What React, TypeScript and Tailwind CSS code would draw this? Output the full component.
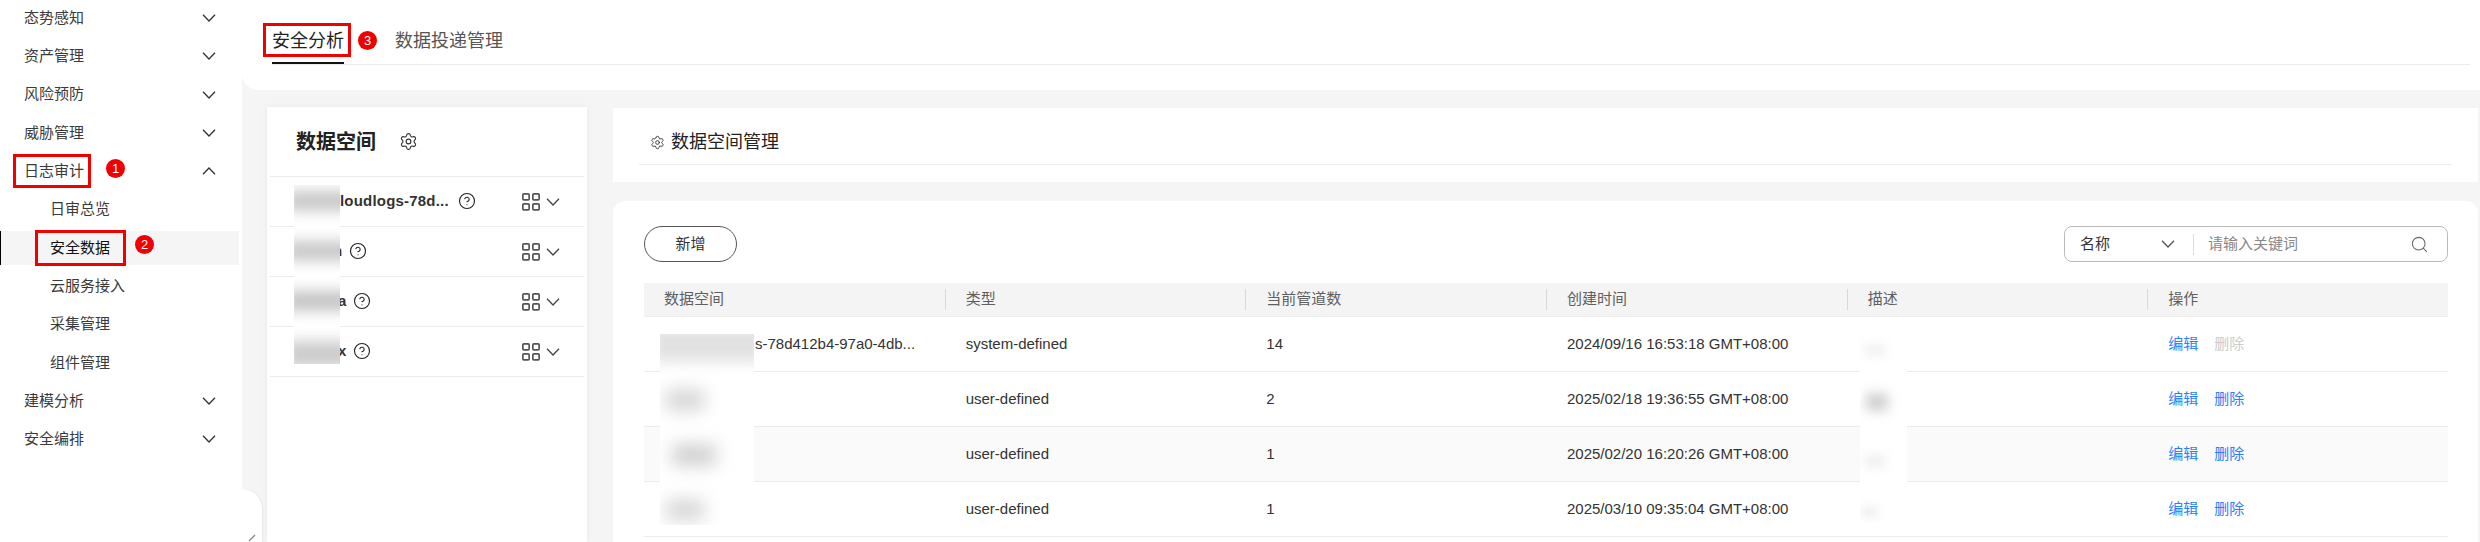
import { CircleHelp, Search, Settings } from 'lucide-react';

const font = { fontFamily: '"Liberation Sans", "Noto Sans CJK SC", sans-serif' };

type NavItem = { label: string; sub?: boolean; open?: boolean; active?: boolean; arrow?: boolean };

const navItems: NavItem[] = [
	{ label: '态势感知', arrow: true },
	{ label: '资产管理', arrow: true },
	{ label: '风险预防', arrow: true },
	{ label: '威胁管理', arrow: true },
	{ label: '日志审计', arrow: true, open: true },
	{ label: '日审总览', sub: true },
	{ label: '安全数据', sub: true, active: true },
	{ label: '云服务接入', sub: true },
	{ label: '采集管理', sub: true },
	{ label: '组件管理', sub: true },
	{ label: '建模分析', arrow: true },
	{ label: '安全编排', arrow: true },
];

const spaces = [
	{ name: 'loudlogs-78d...', pad: 'pl-[70px]', gap: 'ml-[9px]' },
	{ name: 'n', pad: 'pl-[63px]', gap: 'ml-[7px]' },
	{ name: 'a', pad: 'pl-[68px]', gap: 'ml-[6px]' },
	{ name: 'x', pad: 'pl-[68px]', gap: 'ml-[6px]' },
];

const headers = ['数据空间', '类型', '当前管道数', '创建时间', '描述', '操作'];

const rows = [
	{ name: 's-78d412b4-97a0-4db...', type: 'system-defined', count: '14', time: '2024/09/16 16:53:18 GMT+08:00', canDelete: false, bg: 'bg-white' },
	{ name: '', type: 'user-defined', count: '2', time: '2025/02/18 19:36:55 GMT+08:00', canDelete: true, bg: 'bg-white' },
	{ name: '', type: 'user-defined', count: '1', time: '2025/02/20 16:20:26 GMT+08:00', canDelete: true, bg: 'bg-[#fafafa]' },
	{ name: '', type: 'user-defined', count: '1', time: '2025/03/10 09:35:04 GMT+08:00', canDelete: true, bg: 'bg-white' },
];

function Chevron({ up = false, className = '' }: { up?: boolean; className?: string }) {
	return (
		<svg width="14" height="8" viewBox="0 0 14 8" fill="none" stroke="currentColor" strokeWidth="1.3" className={className}>
			<path d={up ? 'M1 7.2 7 1l6 6.2' : 'M1 .8 7 7l6-6.2'} />
		</svg>
	);
}

function GridIcon() {
	return (
		<svg width="18" height="18" viewBox="0 0 18 18" fill="none" stroke="#555" strokeWidth="1.7">
			<rect x=".85" y=".85" width="6.3" height="6" rx="1" />
			<rect x="10.85" y=".85" width="6.3" height="6" rx="1" />
			<rect x=".85" y="10.85" width="6.3" height="6" rx="1" />
			<rect x="10.85" y="10.85" width="6.3" height="6" rx="1" />
		</svg>
	);
}

function Badge({ n, className }: { n: number; className: string }) {
	return (
		<div className={`absolute w-[19px] h-[19px] rounded-full bg-[#f00000] text-white text-[13px] leading-[19px] text-center ${className}`}>
			{n}
		</div>
	);
}

function Sidebar() {
	return (
		<aside className="w-[242px] shrink-0 bg-white -mt-px">
			{navItems.map((item) => (
				<div key={item.label} className={`h-[38.3px] flex items-center ${item.active ? 'mr-[3px] py-[2.5px]' : ''}`}>
					<div className={`flex-1 h-full flex items-center justify-between text-[15px] ${item.sub ? 'pl-[50px]' : 'pl-[24px]'} ${item.active ? 'bg-[#f5f5f5] border-l border-black text-[#111]' : 'text-[#3a3a3a]'} pr-[26px]`}>
						<span className={item.active ? '-ml-px' : ''}>{item.label}</span>
						{item.arrow && <Chevron up={item.open} className="text-[#333]" />}
					</div>
				</div>
			))}
		</aside>
	);
}

function SpaceList() {
	return (
		<section className="w-[320px] shrink-0 bg-white shadow-[0_0_6px_rgba(0,0,0,0.06)] px-[3px]">
			<div className="h-[69px] flex items-center pl-[26px] gap-[23px]">
				<h2 className="text-[20px] font-bold text-[#222]">数据空间</h2>
				<Settings size={19} strokeWidth={1.4} className="text-[#333]" />
			</div>
			{spaces.map((s) => (
				<div key={s.name} className={`h-[50px] border-t border-[#ececec] flex items-center pr-[24px] ${s.pad}`}>
					<span className="text-[15px] font-bold text-[#333] tracking-[0.2px]">{s.name}</span>
					<CircleHelp size={18} strokeWidth={1.5} className={`-mt-px text-[#222] ${s.gap}`} />
					<div className="ml-auto flex items-center gap-[6px]">
						<GridIcon />
						<Chevron className="text-[#444]" />
					</div>
				</div>
			))}
			<div className="border-t border-[#ececec]" />
		</section>
	);
}

function DataTable() {
	return (
		<div className="mt-[21px] text-[15px]">
			<div className="grid grid-cols-6 h-[34px] items-center bg-[#f4f4f4] border-b border-[#ececec] text-[#5f5f5f]">
				{headers.map((h, i) => (
					<div key={h} className={`h-[21px] flex items-center ${i === 0 ? 'pl-[20px]' : 'pl-[20px] border-l border-[#d8d8d8]'}`}>
						{h}
					</div>
				))}
			</div>
			{rows.map((r) => (
				<div key={r.time} className={`grid grid-cols-6 h-[55px] pt-px items-center border-b border-[#ececec] text-[#333] ${r.bg}`}>
					<div className="pl-[111px] whitespace-nowrap">{r.name}</div>
					<div className="pl-[21px]">{r.type}</div>
					<div className="pl-[21px]">{r.count}</div>
					<div className="pl-[21px] whitespace-nowrap">{r.time}</div>
					<div />
					<div className="pl-[21px] flex gap-[16px]">
						<span className="text-[#2b7fff]">编辑</span>
						<span className={r.canDelete ? 'text-[#2b7fff]' : 'text-[#cccccc]'}>删除</span>
					</div>
				</div>
			))}
		</div>
	);
}

export default function App() {
	return (
		<div className="relative w-[2480px] h-[542px] overflow-hidden flex bg-[#f5f5f5]" style={font}>
			<Sidebar />
			<main className="flex-1 min-w-0 flex flex-col">
				<div className="h-[90px] shrink-0 bg-white rounded-bl-2xl pl-[30px] pr-[10px]">
					<div className="h-[65px] border-b border-[#ececec] flex items-end gap-[51px] text-[18px]">
						<span className="h-[65px] pt-[30px] leading-[24px] border-b-2 border-[#111] text-[#222]">安全分析</span>
						<span className="h-[65px] pt-[30px] leading-[24px] text-[#555]">数据投递管理</span>
					</div>
				</div>
				<div className="flex-1 min-h-0 flex pt-[17px] pl-[25px] pr-[2px] gap-[26px]">
					<SpaceList />
					<div className="flex-1 min-w-0 flex flex-col gap-[19px] pt-px">
						<section className="h-[74px] shrink-0 bg-white px-[26px]">
							<div className="h-[57px] pt-[12px] border-b border-[#ececec] flex items-center pl-[11px] gap-[6px]">
								<Settings size={15} strokeWidth={1.4} className="text-[#333]" />
								<h3 className="text-[18px] text-[#222]">数据空间管理</h3>
							</div>
						</section>
						<section className="flex-1 bg-white rounded-t-xl pl-[31px] pr-[30px] pt-[25px]">
							<div className="flex justify-between items-center h-[36px]">
								<button className="w-[93px] h-[36px] rounded-full border border-[#555] text-[15px] text-[#333]">新增</button>
								<div className="w-[384px] h-[36px] rounded-lg border border-[#bbb] flex items-center text-[15px]">
									<div className="w-[128px] pl-[15px] pr-[18px] flex items-center justify-between text-[#333]">
										<span>名称</span>
										<Chevron className="text-[#555]" />
									</div>
									<div className="h-[21px] border-l border-[#ddd]" />
									<span className="ml-[14px] text-[#888]">请输入关键词</span>
									<Search size={19} strokeWidth={1.3} className="ml-auto mr-[18px] text-[#666]" />
								</div>
							</div>
							<DataTable />
						</section>
					</div>
				</div>
			</main>

			{/* blurred out names */}
			<div className="absolute left-[294px] top-[185px] w-[46px] h-[179px] bg-white overflow-hidden">
				<div className="absolute -left-2 w-[70px] top-[6px] h-[20px] bg-[#c8c8c8] blur-[7px]" />
				<div className="absolute -left-2 w-[70px] top-[56px] h-[20px] bg-[#c8c8c8] blur-[7px]" />
				<div className="absolute -left-2 w-[70px] top-[106px] h-[20px] bg-[#c4c4c4] blur-[7px]" />
				<div className="absolute -left-2 w-[70px] top-[156px] h-[26px] bg-[#cccccc] blur-[7px]" />
			</div>
			<div className="absolute left-[660px] top-[334px] w-[94px] h-[191px] bg-white overflow-hidden">
				<div className="absolute -left-2 -top-2 w-[112px] h-[36px] bg-[#e2e2e2] blur-[7px]" />
				<div className="absolute left-[6px] top-[56px] w-[38px] h-[20px] bg-[#d2d2d2] blur-[9px]" />
				<div className="absolute left-[12px] top-[111px] w-[44px] h-[20px] bg-[#cccccc] blur-[9px]" />
				<div className="absolute left-[6px] top-[166px] w-[38px] h-[20px] bg-[#d4d4d4] blur-[9px]" />
			</div>
			<div className="absolute left-[1860px] top-[336px] w-[47px] h-[187px] bg-white overflow-hidden">
				<div className="absolute left-[4px] top-[8px] w-[22px] h-[12px] bg-[#f2f2f2] blur-[5px]" />
				<div className="absolute left-[6px] top-[57px] w-[22px] h-[18px] bg-[#d0d0d0] blur-[6px]" />
				<div className="absolute left-[4px] top-[118px] w-[22px] h-[14px] bg-[#f2f2f2] blur-[5px]" />
				<div className="absolute left-[2px] top-[170px] w-[16px] h-[12px] bg-[#f0f0f0] blur-[5px]" />
			</div>

			{/* sidebar collapse handle */}
			<div className="absolute left-[242px] top-[489px] w-[20px] h-[53px] bg-white rounded-tr-[20px] shadow-[1px_0_2px_rgba(0,0,0,0.06)]">
				<svg width="12" height="10" viewBox="0 0 12 10" fill="none" stroke="#888" strokeWidth="1.2" className="absolute left-[4px] top-[45px]">
					<path d="M9 1 3 7" />
				</svg>
			</div>

			{/* annotations */}
			<div className="absolute left-[13px] top-[154px] w-[78px] h-[34px] border-[3px] border-[#f00000]" />
			<div className="absolute left-[35px] top-[230px] w-[91px] h-[36px] border-[3px] border-[#f00000]" />
			<div className="absolute left-[263px] top-[23px] w-[88px] h-[34px] border-[3px] border-[#f00000]" />
			<Badge n={1} className="left-[106px] top-[159px]" />
			<Badge n={2} className="left-[135px] top-[235px]" />
			<Badge n={3} className="left-[358px] top-[31px]" />
		</div>
	);
}
